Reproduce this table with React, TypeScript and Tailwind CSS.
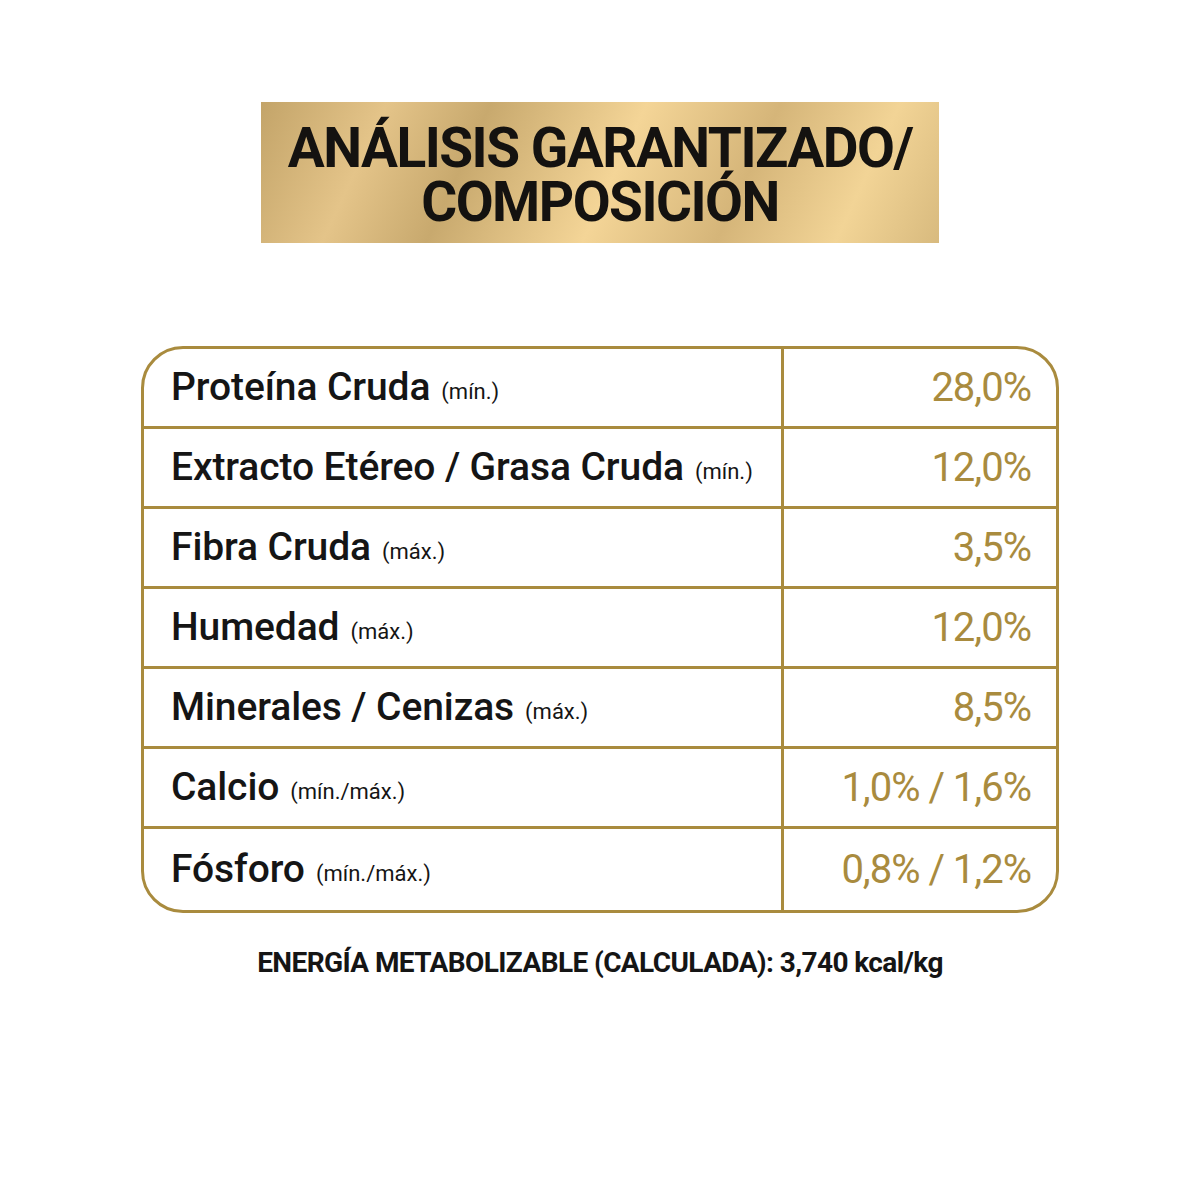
import React from "react";

const rows: { label: string; note: string; value: string }[] = [
  { label: "Proteína Cruda", note: "(mín.)", value: "28,0%" },
  { label: "Extracto Etéreo / Grasa Cruda", note: "(mín.)", value: "12,0%" },
  { label: "Fibra Cruda", note: "(máx.)", value: "3,5%" },
  { label: "Humedad", note: "(máx.)", value: "12,0%" },
  { label: "Minerales / Cenizas", note: "(máx.)", value: "8,5%" },
  { label: "Calcio", note: "(mín./máx.)", value: "1,0% / 1,6%" },
  { label: "Fósforo", note: "(mín./máx.)", value: "0,8% / 1,2%" },
];

export default function App() {
  return (
    <div
      className="w-[1200px] h-[1200px] bg-white flex flex-col items-center"
      style={{ fontFamily: "Roboto, 'Liberation Sans', sans-serif" }}
    >
      <div className="mt-[102px] w-[678px] h-[141px] flex flex-col items-center justify-center bg-[linear-gradient(115deg,#c3a469_0%,#e4c489_17%,#c8a96e_31%,#f4d597_52%,#d5b579_70%,#f2d496_86%,#d8ba7e_100%)]">
        <div className="text-[55px] leading-[54px] font-bold text-[#141210] tracking-[-1.5px] text-center pt-[4px]">
          <div>ANÁLISIS GARANTIZADO/</div>
          <div>COMPOSICIÓN</div>
        </div>
      </div>

      <div className="mt-[103px] w-[918px] border-[3px] border-[#a98b3e] rounded-[42px] flex flex-col overflow-hidden">
        {rows.map((r, i) => (
          <div
            key={r.label}
            className={
              i < rows.length - 1
                ? "flex h-[80px] border-b-[3px] border-[#a98b3e]"
                : "flex h-[81px]"
            }
          >
            <div className="w-[640px] border-r-[3px] border-[#a98b3e] flex items-center pl-[27px]">
              <span className="text-[39px] font-medium text-[#151515] tracking-[-0.1px]">
                {r.label}
              </span>
              <span className="ml-[11px] mt-[8px] text-[22px] text-[#151515] tracking-[0px]">
                {r.note}
              </span>
            </div>
            <div className="flex-1 flex items-center justify-end pr-[25px]">
              <span className="text-[40px] text-[#a98b3e] tracking-[-1px]">
                {r.value}
              </span>
            </div>
          </div>
        ))}
      </div>

      <div className="mt-[29px] text-[28px] font-bold text-[#151515] tracking-[-0.6px]">
        ENERGÍA METABOLIZABLE (CALCULADA): 3,740 kcal/kg
      </div>
    </div>
  );
}
